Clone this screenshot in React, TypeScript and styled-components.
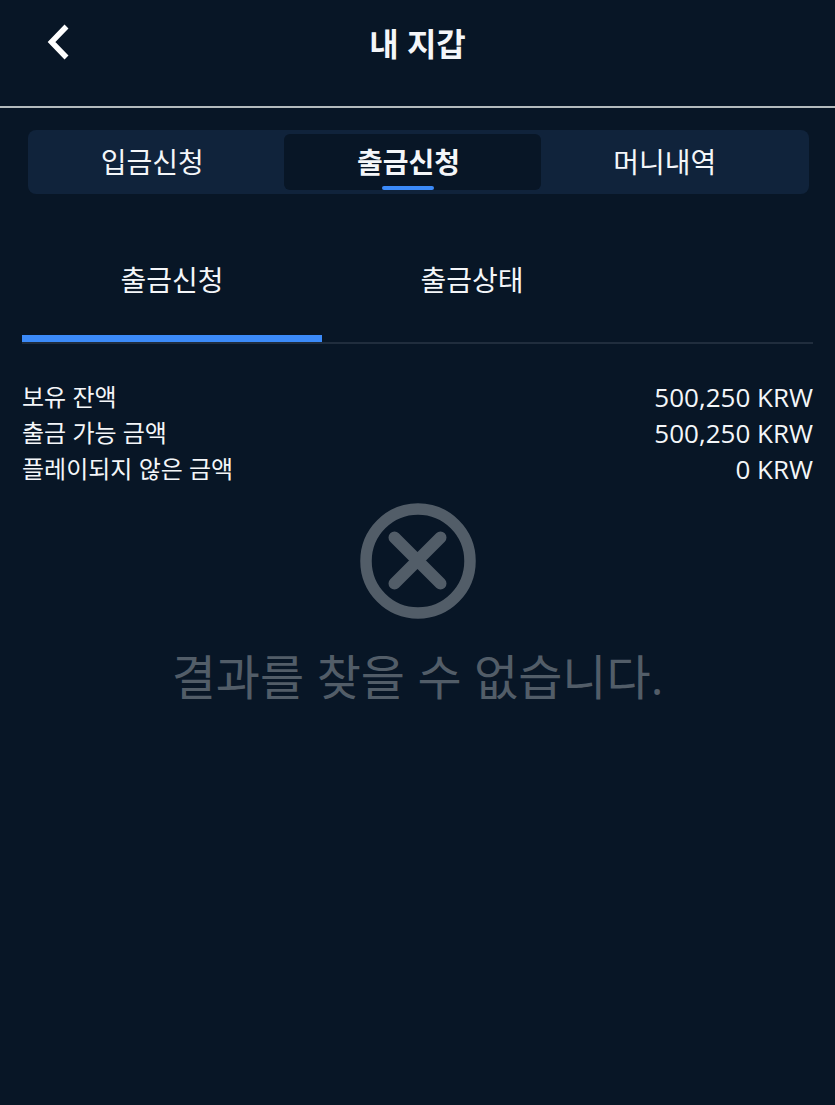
import React from "react";
import styled, { createGlobalStyle } from "styled-components";

const GlobalStyle = createGlobalStyle`
  *, *::before, *::after { box-sizing: border-box; }
  body {
    margin: 0;
    background: #081626;
    color: #f4f6f9;
    font-family: "Open Sans", "Noto Sans CJK KR", sans-serif;
  }
  button {
    border: 0;
    padding: 0;
    background: none;
    color: inherit;
    font: inherit;
    cursor: pointer;
  }
`;

const Page = styled.div`
  min-height: 100vh;
`;

const Header = styled.header`
  display: grid;
  grid-template-columns: 72px 1fr 72px;
  align-items: start;
  height: 108px;
  padding: 20px 22px 0;
  border-bottom: 2px solid #b3babd;
`;

const BackButton = styled.button`
  display: flex;
  align-items: center;
  justify-content: center;
  height: 44px;
`;

const Title = styled.h1`
  margin: 0;
  font-size: 32px;
  line-height: 48px;
  font-weight: 700;
  text-align: center;
`;

const WalletNav = styled.nav`
  display: grid;
  grid-template-columns: repeat(3, 1fr);
  margin: 22px 26px 0 28px;
  padding: 4px 12px 4px 0;
  border-radius: 8px;
  background: #10233b;
`;

const WalletTab = styled.button<{ $active?: boolean }>`
  position: relative;
  height: 56px;
  border-radius: 6px;
  background: ${({ $active }) => ($active ? "#081626" : "transparent")};
  && {
    padding-right: 8px;
    font-size: 28px;
    line-height: 56px;
    font-weight: ${({ $active }) => ($active ? 700 : 400)};
  }
`;

const Marker = styled.span`
  position: absolute;
  left: 0;
  right: 8px;
  bottom: 0;
  width: 52px;
  height: 4px;
  margin: 0 auto;
  border-radius: 2px;
  background: #3b8af8;
`;

const Content = styled.main`
  padding: 42px 22px 0;
`;

const SubTabs = styled.div`
  display: flex;
  border-bottom: 2px solid #202d3d;
`;

const SubTab = styled.button<{ $active?: boolean }>`
  flex: 0 1 300px;
  height: 106px;
  && {
    padding: 24px 0 35px;
    font-size: 28px;
    line-height: 40px;
  }
  border-bottom: 7px solid
    ${({ $active }) => ($active ? "#3b8af8" : "transparent")};
`;

const Balances = styled.dl`
  margin: 35px 0 0;
`;

const BalanceRow = styled.div`
  display: flex;
  justify-content: space-between;
  line-height: 36px;
`;

const Label = styled.dt`
  font-size: 24px;
`;

const Amount = styled.dd`
  margin: 0;
  font-size: 26px;
`;

const Empty = styled.section`
  display: flex;
  flex-direction: column;
  align-items: center;
  gap: 22px;
  padding-top: 16px;
  color: #525d68;
`;

const EmptyText = styled.p`
  margin: 0;
  font-size: 48px;
  line-height: 72px;
  text-align: center;
`;

const walletTabs = ["입금신청", "출금신청", "머니내역"];
const subTabs = ["출금신청", "출금상태"];
const balances = [
  ["보유 잔액", "500,250 KRW"],
  ["출금 가능 금액", "500,250 KRW"],
  ["플레이되지 않은 금액", "0 KRW"],
];

export default function App() {
  return (
    <Page lang="ko">
      <GlobalStyle />
      <Header>
        <BackButton aria-label="뒤로">
          <svg width="24" height="36" viewBox="0 0 24 36" fill="none" aria-hidden="true">
            <path d="M20.5 2.5 5.5 18l15 15.5" stroke="#fff" strokeWidth="5.5" />
          </svg>
        </BackButton>
        <Title>내 지갑</Title>
      </Header>
      <WalletNav>
        {walletTabs.map((name, i) => (
          <WalletTab key={name} $active={i === 1}>
            {name}
            {i === 1 && <Marker />}
          </WalletTab>
        ))}
      </WalletNav>
      <Content>
        <SubTabs role="tablist">
          {subTabs.map((name, i) => (
            <SubTab key={name} role="tab" aria-selected={i === 0} $active={i === 0}>
              {name}
            </SubTab>
          ))}
        </SubTabs>
        <Balances>
          {balances.map(([label, amount]) => (
            <BalanceRow key={label}>
              <Label>{label}</Label>
              <Amount>{amount}</Amount>
            </BalanceRow>
          ))}
        </Balances>
        <Empty>
          <svg width="116" height="116" viewBox="0 0 116 116" fill="none" stroke="currentColor" aria-hidden="true">
            <circle cx="58" cy="58" r="52" strokeWidth="11.5" />
            <path d="M34.5 34.5l46 46M80.5 34.5l-46 46" strokeWidth="12" strokeLinecap="round" />
          </svg>
          <EmptyText>결과를 찾을 수 없습니다.</EmptyText>
        </Empty>
      </Content>
    </Page>
  );
}
